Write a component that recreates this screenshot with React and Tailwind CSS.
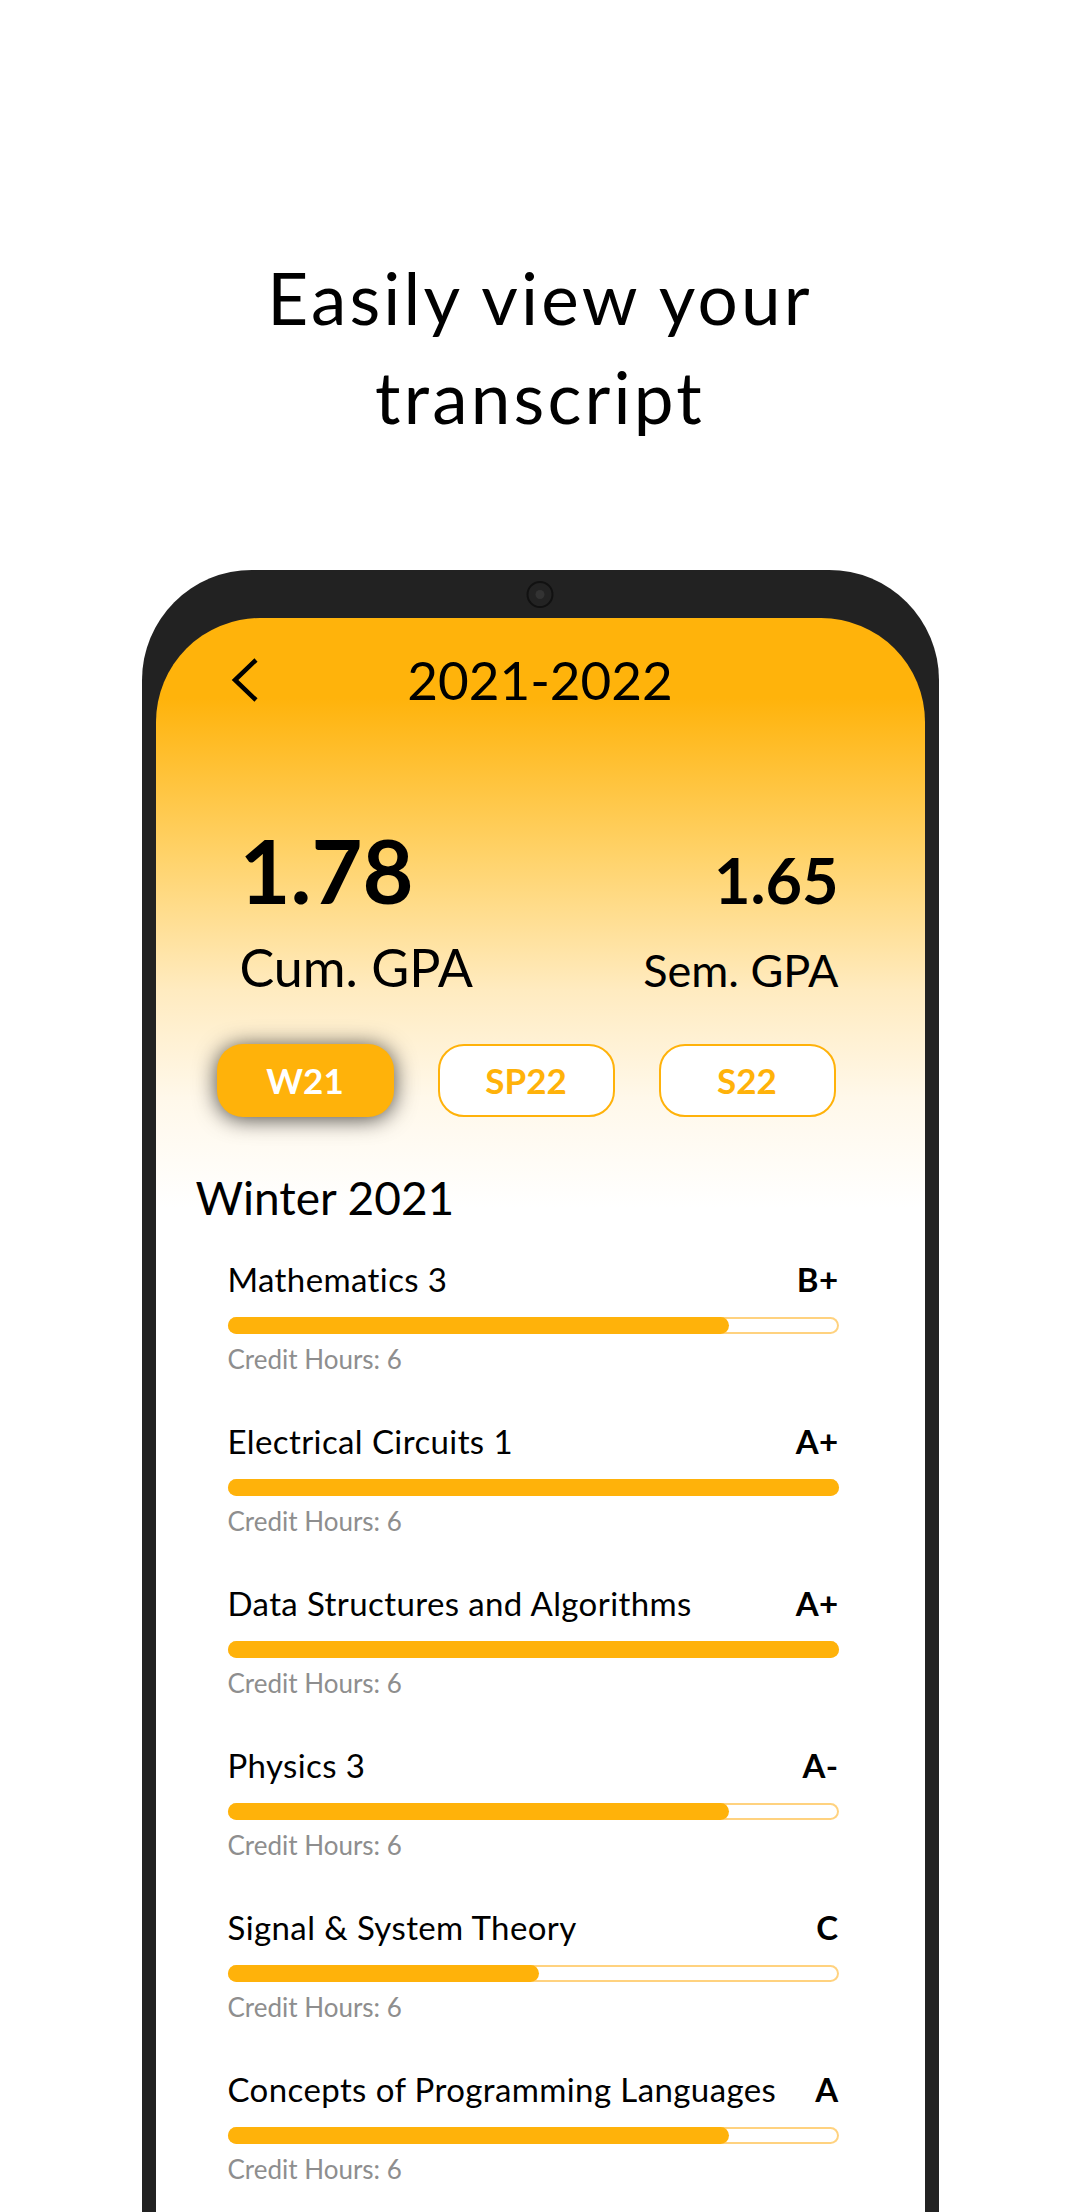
const courses = [
  { name: 'Mathematics 3', grade: 'B+', pct: 82 },
  { name: 'Electrical Circuits 1', grade: 'A+', pct: 100 },
  { name: 'Data Structures and Algorithms', grade: 'A+', pct: 100 },
  { name: 'Physics 3', grade: 'A-', pct: 82 },
  { name: 'Signal & System Theory', grade: 'C', pct: 51 },
  { name: 'Concepts of Programming Languages', grade: 'A', pct: 82 },
];

const terms = ['W21', 'SP22', 'S22'];

function CourseRow({ course, first }) {
  return (
    <div className={`flex flex-col ${first ? '' : 'mt-[47px]'}`}>
      <div className="flex h-[40px] items-center justify-between text-[33px] leading-[40px] tracking-[0.012em]">
        <span>{course.name}</span>
        <span className="font-bold">{course.grade}</span>
      </div>
      <div className="mt-[18px] h-[17px] rounded-full bg-white shadow-[inset_0_0_0_2px_#FFD27F]">
        <div className="h-full rounded-full bg-[#FFB20A]" style={{ width: `${course.pct}%` }} />
      </div>
      <div className="mt-[10px] h-[30px] text-[26px] leading-[30px] text-[#8e8e8e]">Credit Hours: 6</div>
    </div>
  );
}

export default function App() {
  return (
    <div className="flex h-[2212px] w-[1080px] flex-col items-center overflow-hidden bg-white font-['Lato',sans-serif] text-black">
      <h1 className="mt-[248px] text-center text-[71px] font-normal leading-[99px] tracking-[0.045em]">
        Easily view your
        <br />
        transcript
      </h1>

      <div className="relative mt-[124px] flex w-[797px] flex-1 flex-col rounded-t-[110px] bg-[#222] px-[14px] pt-[48px]">
        <div className="absolute left-1/2 top-[11px] grid h-[27px] w-[27px] -translate-x-1/2 place-items-center rounded-full border-2 border-[#111] bg-[#232323]">
          <div className="h-[9px] w-[9px] rounded-full bg-[#333]" />
        </div>

        <div className="flex flex-1 flex-col rounded-t-[104px] bg-[linear-gradient(180deg,#FFB30B_80px,#FFD36B_240px,#FFEBC0_372px,#FFF8EA_480px,#ffffff_590px)]">
          <header className="flex items-center px-[75px] pt-[30px]">
            <div className="w-[30px]">
              <svg width="28" height="44" viewBox="0 0 28 44" fill="none">
                <path d="M25 2 L4 22 L25 42" stroke="#000" strokeWidth="4.5" strokeLinejoin="miter" />
              </svg>
            </div>
            <h2 className="flex-1 text-center text-[53px] font-normal leading-[64px]">2021-2022</h2>
            <div className="w-[30px]" />
          </header>

          <div className="mt-[114px] flex items-baseline justify-between pl-[84px] pr-[86px]">
            <span className="text-[88px] font-bold leading-[88px]">1.78</span>
            <span className="text-[63px] font-bold leading-[88px]">1.65</span>
          </div>
          <div className="mt-[13px] flex items-baseline justify-between pl-[84px] pr-[86px]">
            <span className="text-[52px] leading-[60px]">Cum. GPA</span>
            <span className="text-[45px] leading-[60px]">Sem. GPA</span>
          </div>

          <div className="mt-[44px] flex gap-[44px] pl-[61px]">
            {terms.map((t, i) => (
              <button
                key={t}
                type="button"
                className={`grid h-[73px] w-[177px] place-items-center rounded-[26px] text-[35px] font-bold ${
                  i === 0
                    ? 'bg-[#FFB20A] text-white shadow-[0_2px_22px_rgba(0,0,0,0.72)]'
                    : 'border-2 border-[#FFB20A] bg-white text-[#FFB20A]'
                }`}
              >
                {t}
              </button>
            ))}
          </div>

          <h3 className="mt-[53px] pl-[40px] text-[46px] font-normal leading-[56px]">Winter 2021</h3>

          <div className="mt-[33px] flex flex-col pl-[72px] pr-[86px]">
            {courses.map((c, i) => (
              <CourseRow key={c.name} course={c} first={i === 0} />
            ))}
          </div>
        </div>
      </div>
    </div>
  );
}
